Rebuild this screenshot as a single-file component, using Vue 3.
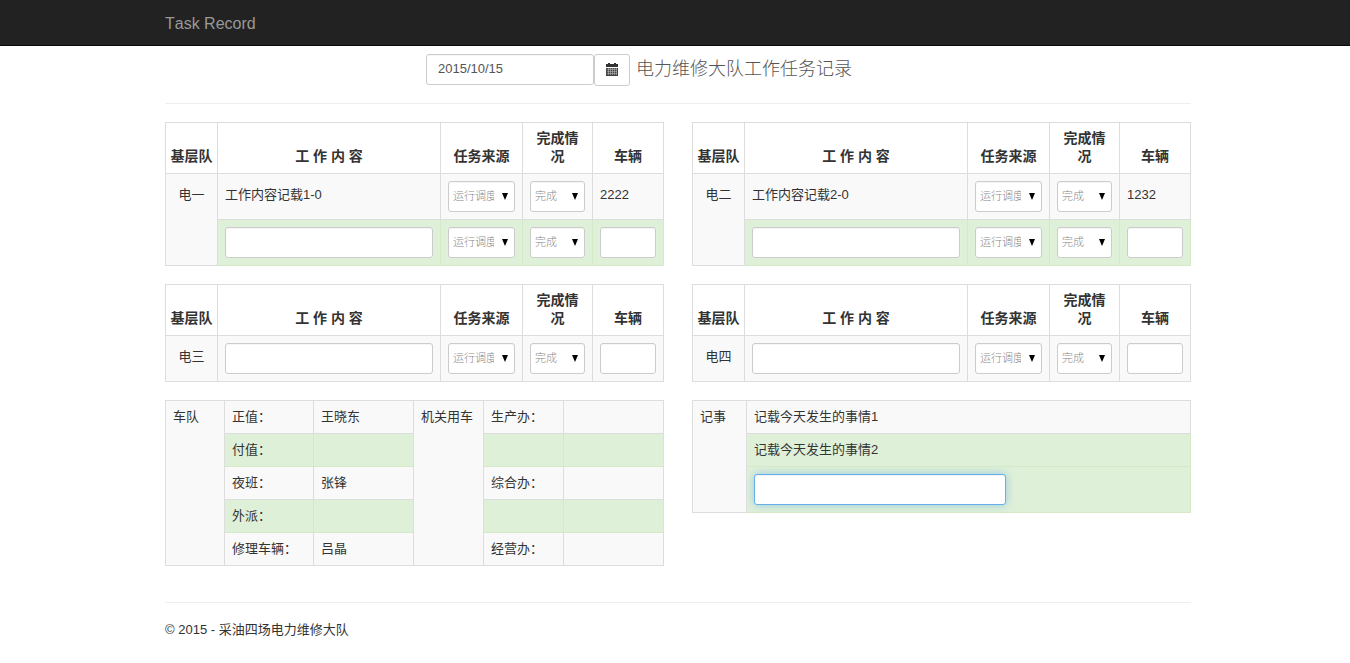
<script setup>
import { ref, onMounted } from 'vue'

const date = ref('2015/10/15')
const note = ref('')
const noteInput = ref(null)
const sources = ['运行调度', '临时任务']
const states = ['完成', '未完成']

const teams = [
  { name: '电一', records: [{ text: '工作内容记载1-0', car: '2222' }] },
  { name: '电二', records: [{ text: '工作内容记载2-0', car: '1232' }] },
  { name: '电三', records: [] },
  { name: '电四', records: [] },
].map((team) => ({ ...team, rows: [...team.records, null] }))

const fleet = [
  { duty: '正值：', person: '王晓东', office: '生产办：' },
  { duty: '付值：', person: '', office: '' },
  { duty: '夜班：', person: '张锋', office: '综合办：' },
  { duty: '外派：', person: '', office: '' },
  { duty: '修理车辆：', person: '吕晶', office: '经营办：' },
]

onMounted(() => noteInput.value.focus())
</script>

<template>
  <div class="page">
    <header class="navbar">
      <div class="container"><a class="brand" href="#">Task Record</a></div>
    </header>

    <main class="container">
      <div class="heading">
        <input v-model="date" class="control date" type="text" aria-label="日期" />
        <button class="calendar" type="button" aria-label="选择日期">
          <svg width="14" height="14" viewBox="0 0 14 14" aria-hidden="true">
            <path fill="#333" d="M1 1h2V0h2v1h4V0h2v1h2v3H1z" />
            <path fill="#444" d="M1 5h12v8H1z" />
            <path stroke="#ccc" stroke-width="1" d="M3.5 5v7M5.5 5v7M7.5 5v7M9.5 5v7M11.5 5v7" opacity=".5" />
            <path stroke="#ccc" stroke-width="1" d="M2 6.5h10M2 8.5h10M2 10.5h10" opacity=".45" />
          </svg>
        </button>
        <h1>电力维修大队工作任务记录</h1>
      </div>

      <div class="grid">
        <table v-for="team in teams" :key="team.name" class="tasks">
          <colgroup>
            <col class="c-team" /><col class="c-text" /><col class="c-source" /><col class="c-state" /><col class="c-car" />
          </colgroup>
          <thead>
            <tr>
              <th class="team-head">基层队</th>
              <th>工 作 内 容</th>
              <th>任务来源</th>
              <th>完成情况</th>
              <th>车辆</th>
            </tr>
          </thead>
          <tbody>
            <tr v-for="(row, i) in team.rows" :key="i" :class="{ success: i % 2 }">
              <td v-if="i === 0" class="team label" :rowspan="team.rows.length">{{ team.name }}</td>
              <td v-if="row" class="label">{{ row.text }}</td>
              <td v-else><input class="control" type="text" :aria-label="team.name + '工作内容'" /></td>
              <td>
                <div class="picker">
                  <select class="control" :aria-label="team.name + '任务来源'">
                    <option v-for="s in sources" :key="s">{{ s }}</option>
                  </select>
                  <svg width="8" height="8" viewBox="0 0 8 8" aria-hidden="true"><path d="M1 1h6L4 8z" /></svg>
                </div>
              </td>
              <td>
                <div class="picker">
                  <select class="control" :aria-label="team.name + '完成情况'">
                    <option v-for="s in states" :key="s">{{ s }}</option>
                  </select>
                  <svg width="8" height="8" viewBox="0 0 8 8" aria-hidden="true"><path d="M1 1h6L4 8z" /></svg>
                </div>
              </td>
              <td v-if="row" class="label">{{ row.car }}</td>
              <td v-else><input class="control" type="text" :aria-label="team.name + '车辆'" /></td>
            </tr>
          </tbody>
        </table>

        <table class="fleet">
          <colgroup>
            <col class="f-head" /><col class="f-duty" /><col class="f-person" /><col class="f-use" /><col class="f-office" /><col class="f-value" />
          </colgroup>
          <tbody>
            <tr v-for="(row, i) in fleet" :key="i" :class="{ success: i % 2 }">
              <td v-if="i === 0" class="span" :rowspan="fleet.length">车队</td>
              <td>{{ row.duty }}</td>
              <td>{{ row.person }}</td>
              <td v-if="i === 0" class="span" :rowspan="fleet.length">机关用车</td>
              <td>{{ row.office }}</td>
              <td></td>
            </tr>
          </tbody>
        </table>

        <table class="notes">
          <colgroup><col class="n-head" /><col class="n-text" /></colgroup>
          <tbody>
            <tr>
              <td class="span" rowspan="3">记事</td>
              <td>记载今天发生的事情1</td>
            </tr>
            <tr class="success"><td>记载今天发生的事情2</td></tr>
            <tr class="success">
              <td><input ref="noteInput" v-model="note" class="control note" type="text" aria-label="记事" /></td>
            </tr>
          </tbody>
        </table>
      </div>

      <footer>© 2015 - 采油四场电力维修大队</footer>
    </main>
  </div>
</template>

<style>
body {
  margin: 0;
  background: #fff;
}
</style>

<style scoped>
.page {
  font: 13px/18px "Liberation Sans", "Noto Sans CJK SC", sans-serif;
  font-kerning: none;
  color: #333;
}
.page * {
  box-sizing: border-box;
}
.page > * {
  padding-left: 6px;
}
.container {
  max-width: 1026px;
  margin: 0 auto;
}
main.container {
  max-width: 1032px;
}
.navbar {
  background: #222;
  border-bottom: 1px solid #080808;
}
.brand {
  display: inline-block;
  font-size: 16px;
  line-height: 18px;
  padding: 15px 0 12px;
  color: #999;
  text-decoration: none;
}
.heading {
  display: flex;
  align-items: flex-start;
  padding: 8px 0 17px 261px;
  border-bottom: 1px solid #eee;
}
.control {
  display: block;
  width: 100%;
  height: 31px;
  margin: 0;
  padding: 5px 11px;
  font: inherit;
  color: #555;
  background: #fff;
  border: 1px solid #ccc;
  border-radius: 3px;
  box-shadow: inset 0 1px 1px rgba(0, 0, 0, 0.04);
  outline: none;
}
.date {
  width: 168px;
  padding: 4px 11px 6px;
}
.calendar {
  display: flex;
  align-items: center;
  justify-content: center;
  width: 36px;
  height: 32px;
  padding: 0;
  background: #fff;
  border: 1px solid #ccc;
  border-radius: 3px;
}
h1 {
  margin: 0 0 0 6px;
  font-size: 18px;
  font-weight: 300;
  line-height: 30px;
  color: #555;
}
.grid {
  display: grid;
  grid-template-columns: 1fr 1fr;
  gap: 18px 28px;
  align-items: start;
  margin-top: 18px;
}
table {
  width: 100%;
  table-layout: fixed;
  border-collapse: collapse;
}
.c-team { width: 52px; }
.c-text { width: 223px; }
.c-source { width: 82px; }
.c-state { width: 70px; }
.c-car { width: 71px; }
.f-head { width: 59px; }
.f-duty { width: 89px; }
.f-person { width: 100px; }
.f-use { width: 70px; }
.f-office { width: 80px; }
.f-value { width: 100px; }
.n-head { width: 54px; }
.n-text { width: 444px; }
th,
td {
  padding: 7px;
  border: 1px solid #ddd;
}
th {
  padding: 6px 7px 8px;
  font-size: 14px;
  vertical-align: bottom;
}
.team-head {
  padding: 6px 4px 8px;
  white-space: nowrap;
}
td {
  height: 33px;
  vertical-align: top;
  background: #f9f9f9;
}
.label {
  padding-top: 12px;
}
.team {
  text-align: center;
}
.success td {
  background: #dff0d8;
  border-color: #d6e9c6;
}
.span {
  white-space: nowrap;
}
.picker {
  position: relative;
}
.picker svg {
  position: absolute;
  top: 11px;
  right: 6px;
  pointer-events: none;
}
select.control {
  appearance: none;
  padding: 0 20px 1px 4px;
  font-size: 11px;
  font-weight: 300;
  color: #888;
}
.note {
  width: 252px;
}
.note:focus {
  border-color: #66afe9;
  box-shadow: inset 0 1px 1px rgba(0, 0, 0, 0.06), 0 0 8px rgba(102, 175, 233, 0.6);
}
footer {
  margin-top: 36px;
  padding: 18px 0;
  border-top: 1px solid #eee;
}
</style>
